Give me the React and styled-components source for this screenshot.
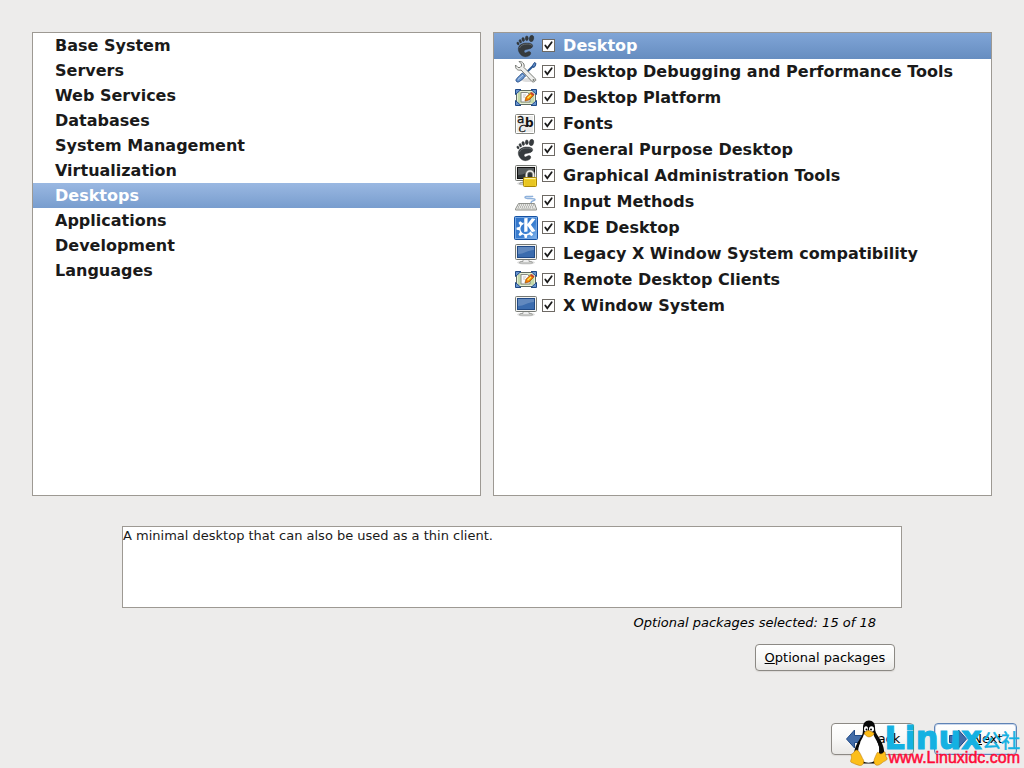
import React from "react";
import styled, { createGlobalStyle } from "styled-components";
import { SiKde } from "react-icons/si";

const GlobalStyle = createGlobalStyle`
  * {
    box-sizing: border-box;
  }

  body {
    margin: 0;
    background-color: #edeceb;
    color: #1a1a1a;
    font-family: "DejaVu Sans", sans-serif;
  }
`;

const Page = styled.main`
  position: relative;
  display: flex;
  flex-direction: column;
  min-height: 100vh;
  padding: 32px 0 13px;
`;

const Panes = styled.div`
  display: flex;
  flex-grow: 1;
  gap: 12px;
  padding: 0 32px;
`;

const Pane = styled.ul`
  flex: ${props => props.$share} 1 0;
  margin: 0;
  padding: 0;
  list-style: none;
  border: 1px solid #9d9993;
  background-color: #fff;
`;

const CategoryButton = styled.button`
  display: block;
  width: 100%;
  height: 25px;
  padding: 0 22px;
  border: 0;
  background: ${props =>
    props.$active ? "linear-gradient(#9ab8e2, #789dce)" : "transparent"};
  color: ${props => (props.$active ? "#fff" : "#1a1a1a")};
  font: bold 16px/24px "DejaVu Sans", sans-serif;
  text-align: left;

  &:focus {
    outline: 0;
  }
`;

const GroupRow = styled.li`
  display: flex;
  align-items: center;
  height: 26px;
  padding-left: 20px;
  background: ${props =>
    props.$active ? "linear-gradient(#80a5d7, #668dc0)" : "transparent"};
  color: ${props => (props.$active ? "#fff" : "#1a1a1a")};

  > svg {
    flex-shrink: 0;
  }

  label {
    flex-grow: 1;
    padding-left: 8px;
    font: bold 16px/24px "DejaVu Sans", sans-serif;
  }
`;

const CheckStyle = styled.span`
  position: relative;
  display: flex;
  margin: 0 0 1px 4px;

  input {
    width: 13px;
    height: 13px;
    margin: 0;
    appearance: none;
    border: 1px solid #6d6964;
    background-color: #fff;
  }

  svg {
    position: absolute;
    inset: 0;
    pointer-events: none;
    opacity: 0;
  }

  input:checked + svg {
    opacity: 1;
  }
`;

const Details = styled.section`
  display: flex;
  flex-direction: column;
  margin: 30px 122px 52px;
  font: 13px/18px "DejaVu Sans", sans-serif;
`;

const Description = styled.div`
  height: 82px;
  border: 1px solid #9d9993;
  background-color: #fff;
`;

const Selected = styled.p`
  margin: 6px 26px 12px 0;
  color: #000;
  font-style: italic;
  text-align: right;
`;

const Button = styled.button`
  display: flex;
  align-items: center;
  justify-content: center;
  gap: 4px;
  height: ${props => (props.$small ? "27px" : "32px")};
  padding: 0 8px;
  border: 1px solid ${props => (props.$primary ? "#5f83b5" : "#8c8984")};
  border-radius: 4px;
  background: linear-gradient(#fff, #f8f8f7 50%, #e9e8e6);
  box-shadow: ${props =>
    props.$primary ? "inset 0 0 0 1px #c9d7ec" : "0 1px 1px #dcdad7"};
  color: #000;
  font: 13px/16px "DejaVu Sans", sans-serif;
`;

const OptionalRow = styled.div`
  display: flex;
  justify-content: flex-end;
  padding-right: 7px;

  ${Button} {
    min-width: 140px;
  }
`;

const Footer = styled.footer`
  display: flex;
  justify-content: flex-end;
  gap: 20px;
  padding-right: 7px;

  ${Button} {
    width: 83px;
  }
`;

const Watermark = styled.div`
  position: absolute;
  right: 4px;
  bottom: 0;
  display: flex;
  align-items: flex-end;
  pointer-events: none;

  > svg {
    margin: 0 -4px 2px 0;
  }
`;

const WatermarkText = styled.div`
  display: flex;
  flex-direction: column;
  align-items: flex-end;
`;

const Brand = styled.div`
  display: flex;
  align-items: flex-end;
  color: #14b1e2;
  font: bold 32px/20px "DejaVu Sans", sans-serif;
  -webkit-text-stroke: 1px #14b1e2;

  span {
    font: 19px/16px "Noto Sans CJK SC", sans-serif;
    -webkit-text-stroke: 0.5px #14b1e2;
  }
`;

const Url = styled.div`
  color: #ff0a37;
  font: 16px/20px "Liberation Sans", sans-serif;
  -webkit-text-stroke: 0.5px #ff0a37;
`;

const Foot = () => (
  <svg width="24" height="24" viewBox="0 0 24 24">
    <g fill="#363b3e" stroke="#25292b" strokeWidth=".4">
      <ellipse cx="17.500" cy="4.500" rx="2.200" ry="3.200" transform="rotate(12 17.500 4.500)" />
      <ellipse cx="12.800" cy="4.300" rx="1.500" ry="2.400" />
      <ellipse cx="9.200" cy="5.500" rx="1.300" ry="2.100" transform="rotate(-12 9.200 5.500)" />
      <ellipse cx="6.300" cy="7.300" rx="1.100" ry="1.800" transform="rotate(-22 6.300 7.300)" />
      <ellipse cx="4" cy="9.500" rx="1" ry="1.500" transform="rotate(-30 4 9.500)" />
      <path d="M4.300 14.500c.500-4 5-5.700 9-5.500 4 .100 6 1.500 5.200 3.700C17.500 15.500 12 15 10.800 16c-1.200.800-.800 2.800.600 2.900 1.500 0 2-1.500 3.800-1.300 2 .200 2 2.500.500 3.700-2.500 2-7 1.900-9-.700-1.600-2-2.600-3.600-2.400-6.100z" />
    </g>
    <path d="M5.500 14c.700-2.500 4-4 7.500-4 2.500 0 4 .500 5 1.500" fill="none" stroke="#777d80" strokeWidth=".7" />
  </svg>
);

const Tools = () => (
  <svg width="24" height="24" viewBox="0 0 24 24">
    <ellipse cx="15" cy="20" rx="8" ry="2" fill="#ddd" />
    <path d="M11 14 19 6" stroke="#285795" strokeWidth="2" />
    <path d="m18.500 5.500 2-3 1.500 1-1 3-1.500 1z" fill="#5f8bc4" stroke="#204a87" />
    <path
      d="M2 20c0-1 5-6 6.500-7l3 3c-1 1.500-6 6-7.500 6s-2-1-2-2z"
      fill="#6d98d0"
      stroke="#204a87"
    />
    <path d="m4 19.500 5-4.500" stroke="#b9d0ec" />
    <path
      d="M5 1.500 7.500 4v2L6 7.500H4L1.500 5C1 8.500 3.500 11 7 10l11 11.500c2 1.500 4.500-1 3-3L10 7.500C11 4 8.500 1 5 1.500z"
      fill="#eeeeec"
      stroke="#777a75"
    />
    <circle cx="19.500" cy="20" r="1" fill="#777a75" />
  </svg>
);

const Platform = () => (
  <svg width="24" height="24" viewBox="0 0 24 24">
    <rect x="2.500" y="4.500" width="19" height="14" rx="1" fill="#c5d9a9" stroke="#5f6b62" />
    <rect x="3.500" y="5.500" width="17" height="12" fill="none" stroke="#e6efd8" />
    <path
      d="M1.500 3.500h5.500L1.500 8.500zM22.500 3.500h-5.500l5.500 5zM1.500 19.500h5.500l-5.500-5zM22.500 19.500h-5.500l5.500-5z"
      fill="#6793cd"
      stroke="#204a87"
    />
    <path d="M7 6.500h6.500l2.500 2.500v7H7z" fill="#fafafa" stroke="#888a85" />
    <path d="M9 9h3M9 11h2" stroke="#c5c5c1" />
    <path d="m11 15 1-3.800 4.500-4.200 3 2.500-4.500 4.500z" fill="#f57900" stroke="#9a5204" strokeWidth=".7" />
    <path d="m13.500 12.300 3.500-3.300" stroke="#fce94f" strokeWidth="1.500" />
    <path d="m16.500 7 1-1 3 2.500-1 1z" fill="#cc3434" />
  </svg>
);

const FontsIcon = () => (
  <svg width="24" height="24" viewBox="0 0 24 24">
    <rect x="1.500" y="2.500" width="19" height="19" rx="1" fill="#ececea" stroke="#888a85" />
    <rect x="2.500" y="3.500" width="17" height="17" fill="none" stroke="#fff" />
    <g fill="#111">
      <text x="3" y="10.500" fontSize="12" fontFamily="DejaVu Sans" stroke="#111" strokeWidth=".3">a</text>
      <text x="11" y="14.500" fontSize="12" fontWeight="bold" fontFamily="DejaVu Sans">b</text>
      <text x="4.500" y="20" fontSize="11" fontStyle="italic" fontFamily="Liberation Serif" stroke="#111" strokeWidth=".3">C</text>
    </g>
  </svg>
);

const Screen = ({ dark }) => (
  <>
    <ellipse cx="12" cy="20.500" rx="9" ry="2" fill="#ddd" />
    <path d="M9 17h6v2.500h2.500l1 1.500h-13l1-1.500H9z" fill="#eee" stroke="#888a85" strokeWidth=".7" />
    <rect x="1.500" y="2.500" width="21" height="15" rx="1" fill="#f2f2f0" stroke="#777a75" />
    <rect x="3.500" y="4.500" width="17" height="11" fill={dark ? "#2e3436" : "#3b6cae"} stroke={dark ? "#111" : "#204a87"} />
    <path d="M4 5h16v3C14 8 10 12 4 12z" fill="#fff" opacity=".2" />
  </>
);

const Monitor = () => (
  <svg width="24" height="24" viewBox="0 0 24 24">
    <Screen />
  </svg>
);

const Admin = () => (
  <svg width="24" height="24" viewBox="0 0 24 24">
    <g transform="translate(0 -1)">
      <Screen dark />
    </g>
    <path d="M12.500 14V10.500a3.500 3.500 0 0 1 7 0V14" fill="none" stroke="#73756f" strokeWidth="3" />
    <path d="M12.500 14V10.500a3.500 3.500 0 0 1 7 0V14" fill="none" stroke="#eeeeec" strokeWidth="1.500" />
    <rect x="9.500" y="13.500" width="13" height="9" rx="1" fill="#f3d32b" stroke="#a88607" />
    <path d="M10.500 14.500h11" stroke="#fff4a3" />
    <path d="M11 17h10M11 19h10M11 21h10" stroke="#d2ac11" strokeWidth=".7" />
  </svg>
);

const Keyboard = () => (
  <svg width="24" height="24" viewBox="0 0 24 24">
    <path d="M17 13c0-3 4-1.500 4-3.500s-10 0-10-2 7 0 8-1.500" fill="none" stroke="#8fb2dc" strokeWidth="1.500" />
    <path d="M4.500 13.500h16l2 5.500v1h-21v-1z" fill="#e7e7e4" stroke="#90928d" />
    <path d="M5 15h15M4 17h16" stroke="#8d8f8a" strokeDasharray="1 1" />
    <path d="M3 19h3M7 19h10M18 19h3" stroke="#b1b3ae" />
  </svg>
);

const KdeIcon = () => (
  <svg width="24" height="24" viewBox="0 0 24 24">
    <defs>
      <linearGradient id="kde" x1="0" y1="0" x2="1" y2="1">
        <stop offset="0" stopColor="#2f72c8" />
        <stop offset=".6" stopColor="#3b80d2" />
        <stop offset="1" stopColor="#8dbdf0" />
      </linearGradient>
    </defs>
    <rect x=".5" y=".5" width="23" height="23" rx="1" fill="url(#kde)" stroke="#1552a3" />
    <rect x="1.500" y="1.500" width="21" height="21" fill="none" stroke="#75a7e4" />
    <SiKde x="2" y="2" size={20} color="#fff" />
  </svg>
);

const Arrow = ({ flip }) => (
  <svg width="20" height="20" viewBox="0 0 20 20">
    <path
      d="M1.500 6.500h9V1l8 9-8 9v-5.500h-9z"
      transform={flip ? "translate(20 0) scale(-1 1)" : undefined}
      fill="#426ca8"
      stroke="#204a87"
    />
  </svg>
);

const Penguin = () => (
  <svg width="38" height="46" viewBox="0 0 38 46">
    <path
      d="M19 .500c-4 0-6 3-6 7 0 5 0 7-3 11-3 5-6 10-6 17l8 8h15l7-8c1-7-2-13-5-18-3-4-4-6-4-10 0-4-2-7-6-7z"
      fill="#080808"
    />
    <path
      d="M14 14c3 2 7 2 9-.500 1 4 5 8 6 13 1 6-1 11-4 14-4 3-9 3-13 0-3-4-5-8-4-13 1-5 5-9 6-13.500z"
      fill="#fff"
    />
    <path d="M9.500 22c-2 4-3 7-2 11M28 21c2 4 3 7 2 11" fill="none" stroke="#080808" strokeWidth="2" />
    <ellipse cx="16" cy="9" rx="2" ry="2.800" fill="#fff" />
    <ellipse cx="21.500" cy="9" rx="2.500" ry="2.800" fill="#fff" />
    <circle cx="16.500" cy="9.500" r="1" />
    <circle cx="21" cy="9.500" r="1" />
    <path d="M14 13c2-2 4-3 6-2l4 2c0 2-3 4-5 4s-4-2-5-4z" fill="#fcbc16" stroke="#b57306" strokeWidth=".5" />
    <path
      d="M1.500 34c2 0 3-4 5-4 3 0 5 7 7 10 1 3-1 6-4 5.500-3-.500-5-2-8-3-2-1 0-3 0-5 0-1-1-3 0-3.500z"
      fill="#fcbe19"
      stroke="#b57306"
      strokeWidth=".5"
    />
    <path
      d="M27 33c1-2 2 1 4 1s3-3 4-2c1 2 0 4 2 6 1 2-2 3-4 4-2 2-5 4-7 3s-2-3-2-5c1-3 2-5 3-7z"
      fill="#fcbe19"
      stroke="#b57306"
      strokeWidth=".5"
    />
  </svg>
);

const Checkbox = ({ id, checked, onChange }) => (
  <CheckStyle>
    <input type="checkbox" id={id} checked={checked} onChange={onChange} />
    <svg width="13" height="13" viewBox="0 0 13 13">
      <path d="M3.300 6.500 5.300 9.300 9.700 3.200" fill="none" stroke="#1a1a1a" strokeWidth="1.800" strokeLinecap="round" />
    </svg>
  </CheckStyle>
);

const categories = [
  "Base System",
  "Servers",
  "Web Services",
  "Databases",
  "System Management",
  "Virtualization",
  "Desktops",
  "Applications",
  "Development",
  "Languages"
];

const groups = [
  { title: "Desktop", Icon: Foot },
  { title: "Desktop Debugging and Performance Tools", Icon: Tools },
  { title: "Desktop Platform", Icon: Platform },
  { title: "Fonts", Icon: FontsIcon },
  { title: "General Purpose Desktop", Icon: Foot },
  { title: "Graphical Administration Tools", Icon: Admin },
  { title: "Input Methods", Icon: Keyboard },
  { title: "KDE Desktop", Icon: KdeIcon },
  { title: "Legacy X Window System compatibility", Icon: Monitor },
  { title: "Remote Desktop Clients", Icon: Platform },
  { title: "X Window System", Icon: Monitor }
];

export default class App extends React.Component {
  state = {
    category: "Desktops",
    group: "Desktop",
    unchecked: []
  };

  toggleGroup = title => {
    this.setState(({ unchecked }) => ({
      group: title,
      unchecked: unchecked.includes(title)
        ? unchecked.filter(item => item !== title)
        : [...unchecked, title]
    }));
  };

  render() {
    const { category, group, unchecked } = this.state;

    return (
      <Page>
        <GlobalStyle />
        <Panes>
          <Pane $share={449}>
            {categories.map(title => (
              <li key={title}>
                <CategoryButton
                  $active={title === category}
                  onClick={() => this.setState({ category: title })}
                >
                  {title}
                </CategoryButton>
              </li>
            ))}
          </Pane>
          <Pane $share={499}>
            {groups.map(({ title, Icon }, i) => (
              <GroupRow key={title} $active={title === group}>
                <Icon />
                <Checkbox
                  id={`group-${i}`}
                  checked={!unchecked.includes(title)}
                  onChange={() => this.toggleGroup(title)}
                />
                <label htmlFor={`group-${i}`}>{title}</label>
              </GroupRow>
            ))}
          </Pane>
        </Panes>
        <Details>
          <Description>
            A minimal desktop that can also be used as a thin client.
          </Description>
          <Selected>Optional packages selected: 15 of 18</Selected>
          <OptionalRow>
            <Button $small>
              <span>
                <u>O</u>ptional packages
              </span>
            </Button>
          </OptionalRow>
        </Details>
        <Footer>
          <Button>
            <Arrow flip />
            <span>
              <u>B</u>ack
            </span>
          </Button>
          <Button $primary>
            <Arrow />
            <span>
              <u>N</u>ext
            </span>
          </Button>
        </Footer>
        <Watermark>
          <Penguin />
          <WatermarkText>
            <Brand>
              Linux<span>公社</span>
            </Brand>
            <Url>www.Linuxidc.com</Url>
          </WatermarkText>
        </Watermark>
      </Page>
    );
  }
}
